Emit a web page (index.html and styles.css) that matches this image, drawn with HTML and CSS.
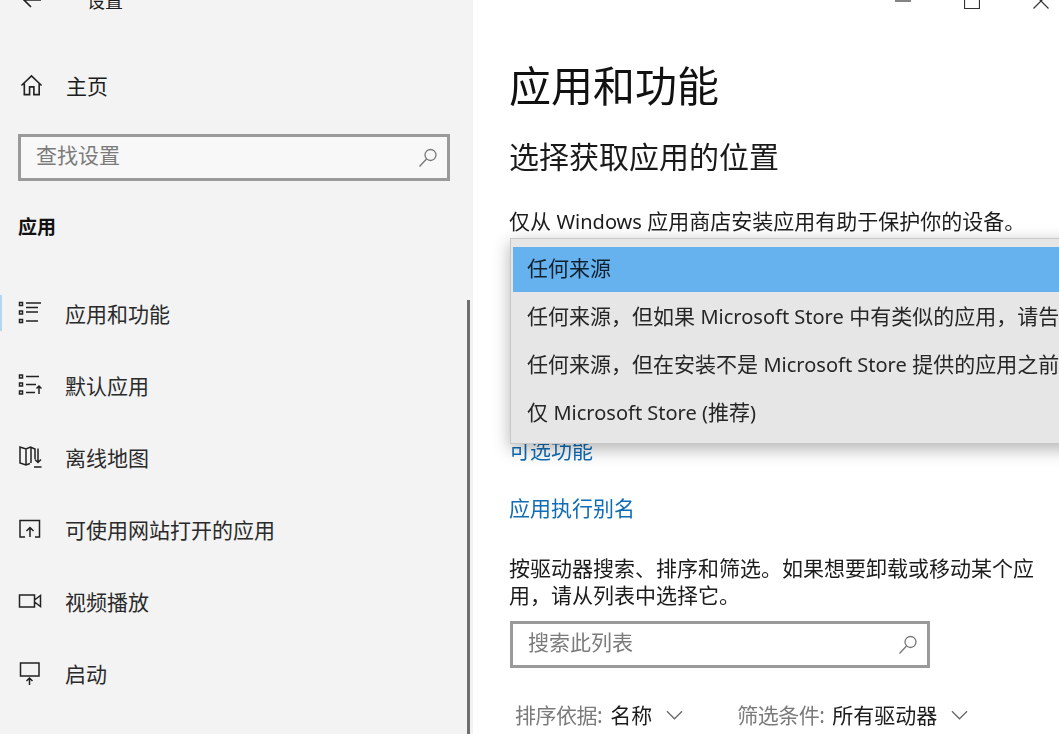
FILE: index.html
```html
<!DOCTYPE html>
<html lang="zh-CN">
<head>
<meta charset="utf-8">
<title>设置</title>
<link rel="stylesheet" href="styles.css">
</head>
<body>
<div class="window">
  <aside class="sidebar">
    <div class="apptitle">
      <svg class="back" viewBox="0 0 20 16"><path d="M9 1 2 8l7 7M2 8h17"/></svg>
      <span>设置</span>
    </div>
    <div class="home">
      <svg class="icon" viewBox="0 0 24 24"><path d="M1.5 12 12 2l10.500 10M4.500 10v11.500h5.500v-8h4.500v8h5.500V10"/></svg>
      <span>主页</span>
    </div>
    <div class="searchbox side-search">
      <span class="hint">查找设置</span>
      <svg class="lens" viewBox="0 0 20 20"><circle cx="12.500" cy="7" r="5.500"/><path d="M8.500 11 1.500 18.500"/></svg>
    </div>
    <h2 class="section">应用</h2>
    <nav class="nav">
      <a class="item active">
        <svg class="icon" viewBox="0 0 24 24"><path d="M1.500 1.500h3v3h-3zM1.500 10h3v3h-3zM1.500 18.500h3v3h-3zM8 2h15M8 11h12M8 20h12M8 6.500h12"/></svg>
        <span>应用和功能</span>
      </a>
      <a class="item">
        <svg class="icon" viewBox="0 0 24 24"><path d="M1.500 2h3v3h-3zM1.500 10h3v3h-3zM1.500 18h3v3h-3zM8 3.500h13M8 11.500h10M8 19.500h9M21 21v-8M18.500 15.500 21 13l2.500 2.500"/></svg>
        <span>默认应用</span>
      </a>
      <a class="item">
        <svg class="icon" viewBox="0 0 24 24"><path d="M17 14V4l-4.500-2-4.500 2-6-2v16l6 2 4-1.500M8 4v16M13 2v16M20 3.500V17M17 14.500l3 3 3-3M16 22h7.500"/></svg>
        <span>离线地图</span>
      </a>
      <a class="item">
        <svg class="icon" viewBox="0 0 24 24"><path d="M7 20H2V3.500h19.500V20H17M12 20v-9M8.500 14 12 10.500l3.500 3.500"/></svg>
        <span>可使用网站打开的应用</span>
      </a>
      <a class="item">
        <svg class="icon" viewBox="0 0 24 24"><path d="M1.500 6h15v12h-15zM16.500 11l6-4.500v11l-6-4.500"/></svg>
        <span>视频播放</span>
      </a>
      <a class="item">
        <svg class="icon" viewBox="0 0 24 24"><path d="M2.500 2h18.500v13H2.500zM11.500 24v-7M8.500 20l3-3 3 3"/></svg>
        <span>启动</span>
      </a>
    </nav>
    <div class="scrollbar"></div>
  </aside>
  <main class="content">
    <div class="controls">
      <svg class="ctl" viewBox="0 0 16 16"><path d="M0 8h16"/></svg>
      <svg class="ctl" viewBox="0 0 16 16"><path d="M.5.500h15v15H.5z"/></svg>
      <svg class="ctl" viewBox="0 0 16 16"><path d="M.5.500l15 15M15.500.500l-15 15"/></svg>
    </div>
    <h1 class="title">应用和功能</h1>
    <h3 class="subtitle">选择获取应用的位置</h3>
    <p class="text desc">仅从 <span class="latin">Windows</span> 应用商店安装应用有助于保护你的设备。</p>
    <a class="link first-link">可选功能</a>
    <a class="link">应用执行别名</a>
    <p class="text para">按驱动器搜索、排序和筛选。如果想要卸载或移动某个应用，请从列表中选择它。</p>
    <div class="searchbox list-search">
      <span class="hint">搜索此列表</span>
      <svg class="lens" viewBox="0 0 20 20"><circle cx="12.500" cy="7" r="5.500"/><path d="M8.500 11 1.500 18.500"/></svg>
    </div>
    <div class="filters">
      <div class="filter"><span class="label">排序依据:</span><span>名称</span>
        <svg class="chev" viewBox="0 0 18 10"><path d="M1 1l8 8 8-8"/></svg></div>
      <div class="filter"><span class="label">筛选条件:</span><span>所有驱动器</span>
        <svg class="chev" viewBox="0 0 18 10"><path d="M1 1l8 8 8-8"/></svg></div>
    </div>
    <ul class="dropdown">
      <li class="selected">任何来源</li>
      <li>任何来源，但如果 <span class="latin">Microsoft Store</span> 中有类似的应用，请告知我</li>
      <li>任何来源，但在安装不是 <span class="latin">Microsoft Store</span> 提供的应用之前警告我</li>
      <li>仅 <span class="latin">Microsoft Store (</span>推荐<span class="latin">)</span></li>
    </ul>
  </main>
</div>
</body>
</html>
```
FILE: styles.css
```css
* { box-sizing: border-box; }
html, body { margin: 0; height: 100%; overflow: hidden; background: #fff; }
body {
  font-family: "Noto Sans", "Noto Sans CJK SC", sans-serif;
  font-size: 21px;
  color: #1c1c1c;
}
svg { fill: none; stroke: currentColor; flex: none; }
.window { display: flex; height: 734px; overflow: hidden; filter: blur(.4px); }
.latin { font-size: 20px; }

.sidebar {
  position: relative;
  flex: 0 0 473px;
  height: 734px;
  background: #f3f3f3;
  overflow: hidden;
}
.apptitle {
  display: flex;
  align-items: center;
  height: 28px;
  margin-top: -14px;
  padding-left: 22px;
  gap: 45px;
  font-size: 18px;
}
.back { width: 20px; height: 16px; stroke-width: 1.700; color: #222; }
.home {
  display: flex;
  align-items: center;
  gap: 23px;
  height: 32px;
  margin-top: 55px;
  padding-left: 20px;
}
.icon { width: 24px; height: 24px; stroke-width: 1.500; color: #222; }
.home .icon { width: 23px; height: 23px; stroke-width: 1.700; }
.searchbox {
  display: flex;
  align-items: center;
  justify-content: space-between;
  border: 3px solid #9a9a9a;
  height: 47px;
  padding: 0 9px 0 15px;
  color: #7b7b7b;
}
.hint { line-height: 1; padding-bottom: 4px; }
.side-search { margin: 33px 23px 0 18px; background: #f8f8f8; }
.lens { width: 20px; height: 20px; stroke-width: 1.300; color: #777; }
.section {
  margin: 30px 0 0 18px;
  font-size: 19px;
  font-weight: 700;
  line-height: 32px;
  color: #111;
}
.nav { display: flex; flex-direction: column; margin-top: 34px; }
.item {
  position: relative;
  display: flex;
  align-items: center;
  gap: 23px;
  height: 72px;
  padding-left: 18px;
  color: #2a2a2a;
}
.active::before {
  content: "";
  position: absolute;
  left: 0;
  top: 18px;
  width: 2px;
  height: 36px;
  background: #b5d4ee;
}
.scrollbar {
  position: absolute;
  left: 467px;
  top: 300px;
  bottom: 0;
  width: 3px;
  background: #6f6f6f;
}

.content { position: relative; flex: 1; min-width: 0; padding-left: 36px; overflow: hidden; }
.controls { display: flex; gap: 53px; margin: -7px 0 0 386px; height: 16px; color: #333; }
.ctl { width: 16px; height: 16px; stroke-width: 1.200; }
.title {
  margin: 45px 0 0;
  font-size: 42px;
  font-weight: 400;
  line-height: 64px;
  color: #111;
}
.subtitle {
  margin: 19px 0 0;
  font-size: 30px;
  font-weight: 400;
  line-height: 40px;
  color: #1a1a1a;
}
.text { margin: 0; line-height: 27px; width: 530px; }
.desc { margin-top: 31px; width: 560px; white-space: nowrap; }
.link { display: block; color: #0f6cb5; line-height: 30px; }
.first-link { margin-top: 200px; }
.first-link + .link { margin-top: 28px; }
.para { margin-top: 32px; }
.list-search { width: 420px; margin: 12px 0 0 1px; background: #fff; padding-left: 15px; }
.filters { display: flex; gap: 54px; margin: 32px 0 0 6px; color: #1c1c1c; }
.filter { display: flex; align-items: center; gap: 8px; line-height: 30px; }
.label { color: #7b7b7b; letter-spacing: -.5px; }
.chev { width: 17px; height: 10px; margin-left: 6px; stroke-width: 1.300; color: #666; }

.dropdown {
  position: absolute;
  left: 37px;
  top: 238px;
  width: 640px;
  height: 206px;
  margin: 0;
  padding: 8px 2px 0;
  list-style: none;
  background: #e6e6e6;
  border: 1px solid #c8c8c8;
  box-shadow: 0 5px 16px rgba(0, 0, 0, .3);
  color: #262626;
}
.dropdown li {
  height: 48px;
  line-height: 42px;
  padding-left: 14px;
  white-space: nowrap;
}
.dropdown .selected { height: 45px; margin-bottom: 3px; background: #66b2ef; color: #10202c; line-height: 42px; }
```
